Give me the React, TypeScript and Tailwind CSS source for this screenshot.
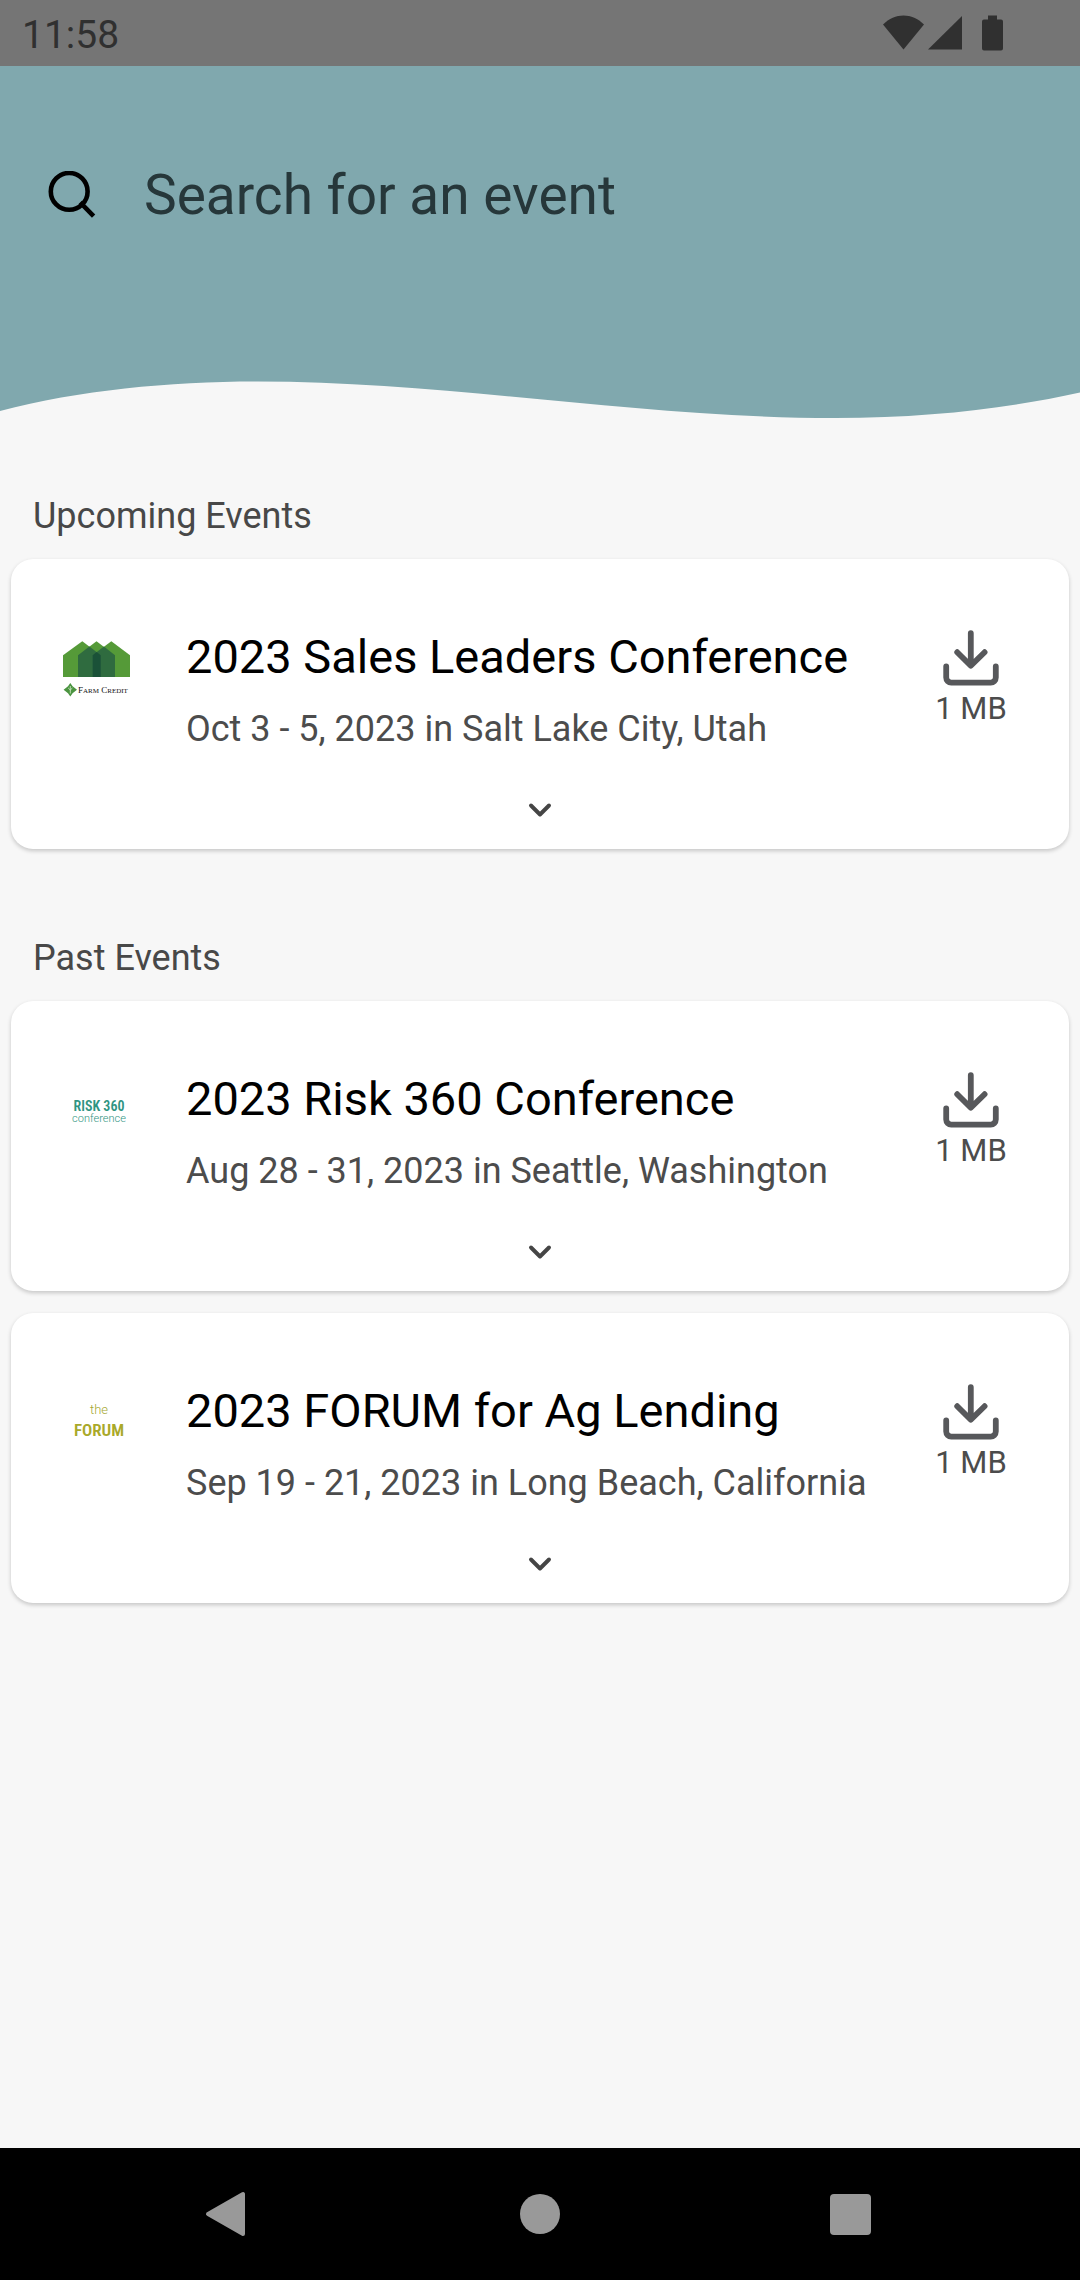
import React, { useState } from 'react';
import { ChevronDown } from 'lucide-react';

interface EventItem {
  id: string;
  title: string;
  details: string;
  size: string;
  logo: React.ReactNode;
}

const FarmCreditLogo = () => (
  <svg viewBox="0 0 72 72" className="size-[72px]" role="img" aria-label="Farm Credit">
    <g fill="#559a38">
      <path d="M3 26.3 22.3 12.3 40.7 26.3V48H3Z" />
      <path d="M18 26.3 36.5 12.3 55 26.3V48H18Z" />
      <path d="M32.7 26.3 51.3 12.3 70 26.3V48H32.7Z" />
    </g>
    <g fill="#2f6b3f">
      <path d="M18 26.3 29.4 17.6 40.7 26.3V48H18Z" />
      <path d="M32.7 26.3 43.9 17.6 55 26.3V48H32.7Z" />
    </g>
    <path fill="#1a5138" d="M32.7 26.3 36.7 23.1 40.7 26.3V48H32.7Z" />
    <path fill="#4b9440" d="M10.3 54 12.6 57.2 17 60.7 12.6 64.2 10.3 67.6 8 64.2 3.6 60.7 8 57.2Z" />
    <path d="M10.3 57V64.5M8.2 59 10.3 61 12.4 59" stroke="#d9ecd0" strokeWidth="0.8" fill="none" />
    <text x="18" y="64" fontFamily="'Liberation Serif', serif" fontSize="9" fill="#111">
      F<tspan fontSize="7">ARM</tspan> C<tspan fontSize="7">REDIT</tspan>
    </text>
  </svg>
);

const RiskLogo = () => (
  <svg viewBox="0 0 72 72" className="size-[72px]" role="img" aria-label="Risk 360 conference" textAnchor="middle">
    <text x="39" y="40" fontFamily="'Roboto Condensed', 'Liberation Sans Narrow', Roboto, sans-serif" fontWeight="600" fontSize="14" fill="#2f9482">
      RISK 360
    </text>
    <text x="39" y="51" fontFamily="Roboto, sans-serif" fontWeight="300" fontSize="11" fill="#2f9482">
      conference
    </text>
  </svg>
);

const ForumLogo = () => (
  <svg viewBox="0 0 72 72" className="size-[72px]" role="img" aria-label="The Forum" textAnchor="middle">
    <text x="39" y="31" fontFamily="Roboto, sans-serif" fontWeight="300" fontSize="13" fill="#a5a72f">
      the
    </text>
    <text x="39" y="53" fontFamily="'Roboto Condensed', 'Liberation Sans Narrow', Roboto, sans-serif" fontWeight="600" fontSize="17" fill="#a9a92a">
      FORUM
    </text>
  </svg>
);

const upcomingEvents: EventItem[] = [
  {
    id: 'sales-leaders',
    title: '2023 Sales Leaders Conference',
    details: 'Oct 3 - 5, 2023 in Salt Lake City, Utah',
    size: '1 MB',
    logo: <FarmCreditLogo />,
  },
];

const pastEvents: EventItem[] = [
  {
    id: 'risk-360',
    title: '2023 Risk 360 Conference',
    details: 'Aug 28 - 31, 2023 in Seattle, Washington',
    size: '1 MB',
    logo: <RiskLogo />,
  },
  {
    id: 'forum',
    title: '2023 FORUM for Ag Lending',
    details: 'Sep 19 - 21, 2023 in Long Beach, California',
    size: '1 MB',
    logo: <ForumLogo />,
  },
];

const StatusBar = () => (
  <div className="flex h-[66px] items-center justify-between bg-[#757575] pl-[22px] pr-[77px] text-[#303030]">
    <span className="pt-1 text-[39px] leading-[48px]">11:58</span>
    <svg viewBox="0 0 120 36" className="h-9 w-[120px]" fill="currentColor" aria-hidden="true">
      <path d="M0 9.5C12-2.5 29-2.5 41 9.5L20.5 34.5Z" />
      <path d="M45 34.5 79 1V34.5Z" />
      <path d="M105 0.5h9v4h4a2 2 0 0 1 2 2v27a2 2 0 0 1-2 2h-17a2 2 0 0 1-2-2v-27a2 2 0 0 1 2-2h4Z" />
    </svg>
  </div>
);

const DownloadIcon = () => (
  <svg
    viewBox="0 1 60 60"
    className="size-[60px]"
    fill="none"
    stroke="#57585b"
    strokeWidth="5.8"
    strokeLinecap="round"
    strokeLinejoin="round"
    aria-hidden="true"
  >
    <path d="M29.8 5.2V37M16.2 24.2 29.8 37.8 43.6 24.2" />
    <path d="M5.2 38.5V49.6a5 5 0 0 0 5 5H49.8a5 5 0 0 0 5-5V38.5" />
  </svg>
);

const EventCard: React.FC<{ event: EventItem }> = ({ event }) => {
  const [open, setOpen] = useState(false);

  return (
    <article className="flex flex-col items-center rounded-[22px] bg-white pt-[70px] pb-[21px] shadow-[0_2px_4px_rgba(0,0,0,0.2)]">
      <div className="flex w-full items-start pl-[49px] pr-14">
        <div className="shrink-0">{event.logo}</div>
        <div className="ml-[54px] min-w-0 flex-1">
          <h3 className="text-[47px] leading-[56px] text-black">{event.title}</h3>
          <p className="mt-5 text-[36px] leading-[48px] text-[#4c4c4c]">{event.details}</p>
        </div>
        <button type="button" aria-label={`Download ${event.title}`} className="flex w-[84px] shrink-0 flex-col items-center">
          <DownloadIcon />
          <span className="whitespace-nowrap text-[31px] leading-10 text-[#4c4c4c]">{event.size}</span>
        </button>
      </div>
      <button
        type="button"
        aria-label="Toggle details"
        aria-expanded={open}
        onClick={() => setOpen(!open)}
        className="mt-[39px]"
      >
        <ChevronDown size={36} strokeWidth={2.6} className={open ? 'rotate-180 text-[#454545]' : 'text-[#454545]'} />
      </button>
    </article>
  );
};

const EventSection: React.FC<{ title: string; events: EventItem[] }> = ({ title, events }) => (
  <section>
    <h2 className="mb-[19px] px-[22px] text-[36px] leading-[48px] text-[#484848]">{title}</h2>
    <div className="flex flex-col gap-[22px]">
      {events.map((event) => (
        <EventCard key={event.id} event={event} />
      ))}
    </div>
  </section>
);

export default function App() {
  const [query, setQuery] = useState('');

  const matches = (event: EventItem) => event.title.toLowerCase().includes(query.toLowerCase());

  return (
    <div className="flex min-h-screen flex-col bg-[#f7f7f7] font-[Roboto,sans-serif]">
      <StatusBar />

      {/* Search header */}
      <header>
        <div className="bg-[#80a8ae] px-12 pt-[97px] pb-[153px]">
          <label className="flex items-center gap-12">
            <svg viewBox="0 1 48 48" className="size-12 shrink-0" fill="none" stroke="#000" strokeWidth="4.6" aria-hidden="true">
              <circle cx="21.2" cy="21.4" r="18.4" />
              <path d="M33.8 34 44 44.4" strokeLinecap="square" />
            </svg>
            <input
              type="text"
              aria-label="Search for an event"
              placeholder="Search for an event"
              value={query}
              onChange={(e) => setQuery(e.target.value)}
              className="h-16 min-w-0 flex-1 bg-transparent text-[55px] leading-[64px] text-black outline-none placeholder:text-[#26373a]"
            />
          </label>
        </div>
        <svg viewBox="0 0 1080 40" preserveAspectRatio="none" className="block h-10 w-full" aria-hidden="true">
          <path fill="#80a8ae" d="M0 0V31C80 10 170 1.5 258 1.5C450 1.5 640 38 835 38C930 38 1010 28 1080 12.5V0Z" />
        </svg>
      </header>

      <main className="flex flex-1 flex-col gap-[85px] px-[11px] pt-[72px]">
        <EventSection title="Upcoming Events" events={upcomingEvents.filter(matches)} />
        <EventSection title="Past Events" events={pastEvents.filter(matches)} />
      </main>

      {/* System navigation */}
      <nav className="flex h-[132px] items-center justify-center gap-[266px] bg-black">
        <button type="button" aria-label="Back">
          <svg viewBox="1 0 46 46" className="size-[46px]" fill="#999" stroke="#999" strokeWidth="4" strokeLinejoin="round">
            <path d="M4 23 39 3V43Z" />
          </svg>
        </button>
        <button type="button" aria-label="Home">
          <svg viewBox="0 0 46 46" className="size-[46px]" fill="#999">
            <circle cx="23" cy="23" r="20" />
          </svg>
        </button>
        <button type="button" aria-label="Recent apps">
          <svg viewBox="0 0 46 46" className="size-[46px]" fill="#999">
            <rect x="1" y="3" width="41" height="41" rx="4" />
          </svg>
        </button>
      </nav>
    </div>
  );
}
